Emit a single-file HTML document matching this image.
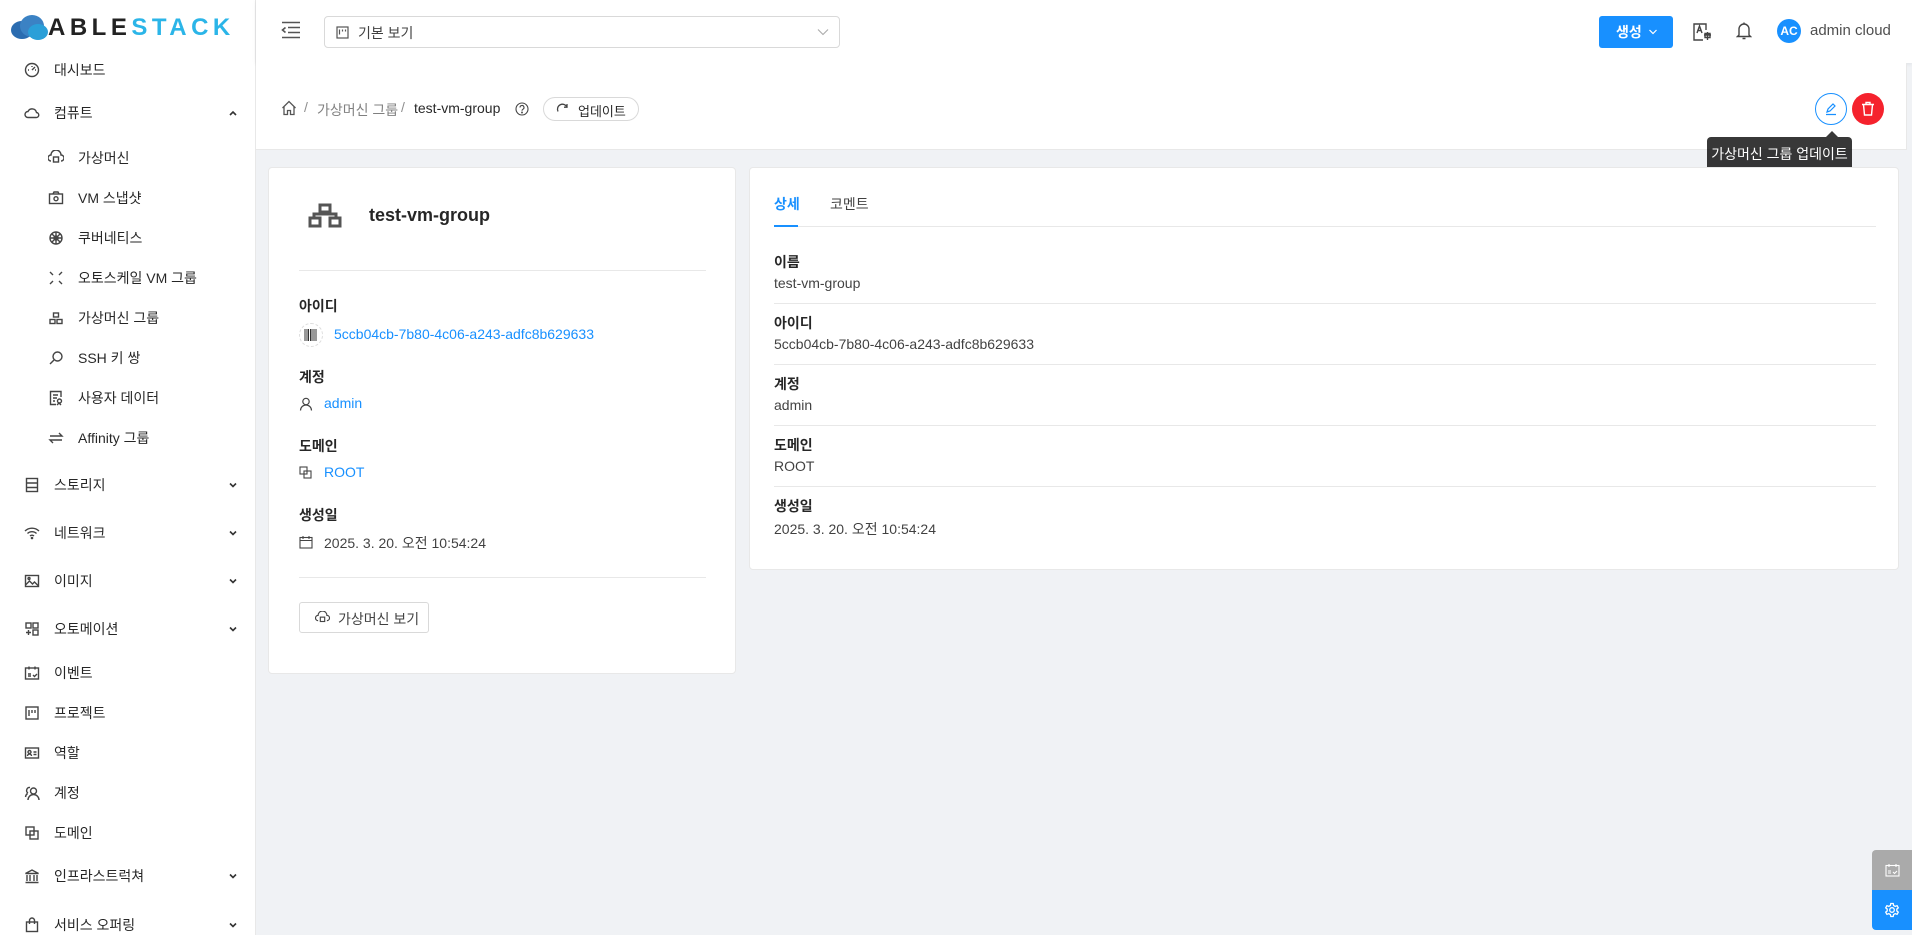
<!DOCTYPE html>
<html><head><meta charset="utf-8"><style>
*{box-sizing:border-box;margin:0;padding:0}
body{width:1912px;height:935px;overflow:hidden;background:#f0f2f5;font-family:"Liberation Sans","Noto Sans CJK KR",sans-serif;font-size:14px;color:rgba(0,0,0,.85);position:relative}
.a{position:absolute}
.side{left:0;top:0;width:256px;height:935px;background:#fff;border-right:1px solid #e8e8e8}
.it{position:absolute;left:0;width:256px;height:20px;line-height:20px;font-size:14px;color:rgba(0,0,0,.85)}
.it svg{position:absolute;top:2px;width:16px;height:16px;fill:none;stroke:#444;stroke-width:1.4}
.top .it svg{left:24px}.top .it span{position:absolute;left:54px}
.sub svg{left:48px}.sub span{position:absolute;left:78px}
.it svg.chev{left:227px!important;top:4px;width:12px;height:12px;stroke:#333;stroke-width:1.6}
.hdr{left:256px;top:0;width:1656px;height:63px;background:#fff;box-shadow:0 1px 4px rgba(0,21,41,.08)}
.card{background:#fff;border-radius:4px;border:1px solid #e8e8e8}
.lbl{font-weight:bold;font-size:14px;color:rgba(0,0,0,.85)}
.blue{color:#1890ff}
.ln{height:1px;background:#e8e8e8}
</style></head><body>
<div class="a side">
 <div class="a" style="left:10px;top:12px;width:245px;height:30px">
  <svg class="a" style="left:0;top:2px" width="40" height="26" viewBox="0 0 40 26"><ellipse cx="12" cy="16" rx="11" ry="9" fill="#2b6cb0"/><ellipse cx="22" cy="12" rx="12" ry="11" fill="#3b82c4"/><ellipse cx="28" cy="18" rx="10" ry="8" fill="#2a9fd8"/></svg>
  <span class="a" style="left:38px;top:3px;font-size:24px;line-height:26px;font-weight:bold;letter-spacing:4.5px;color:#222">ABLE<span style="color:#2bb5e8">STACK</span></span>
 </div>
 <div class="top">
  <div class="it" style="top:60px"><svg viewBox="0 0 16 16"><circle cx="8" cy="8" r="6.5"/><path d="M8 8l3-3M4 8h1M8 4v1M11 8h1"/></svg><span>대시보드</span></div>
  <div class="it" style="top:103px"><svg viewBox="0 0 16 16"><path d="M4 12.5a3 3 0 010-6 4.5 4.5 0 018.5 1 2.5 2.5 0 01-.5 5z"/></svg><span>컴퓨트</span><svg class="chev" viewBox="0 0 12 12"><path d="M3 8l3-3 3 3"/></svg></div>
 </div>
 <div class="sub">
  <div class="it" style="top:148px"><svg viewBox="0 0 16 16"><path d="M3 11a3 3 0 010-6 5 5 0 0110 0 3 3 0 010 6"/><rect x="5.5" y="7" width="5" height="5"/></svg><span>가상머신</span></div>
  <div class="it" style="top:188px"><svg viewBox="0 0 16 16"><rect x="1.5" y="4" width="13" height="9.5"/><path d="M5 4l1-2h4l1 2"/><circle cx="8" cy="8.7" r="2"/></svg><span>VM 스냅샷</span></div>
  <div class="it" style="top:228px"><svg viewBox="0 0 16 16"><circle cx="8" cy="8" r="6"/><circle cx="8" cy="8" r="2"/><path d="M8 2v12M2 8h12M4 4l8 8M12 4l-8 8"/></svg><span>쿠버네티스</span></div>
  <div class="it" style="top:268px"><svg viewBox="0 0 16 16"><path d="M2 2l3 3M14 2l-3 3M2 14l3-3M14 14l-3-3"/></svg><span>오토스케일 VM 그룹</span></div>
  <div class="it" style="top:308px"><svg viewBox="0 0 16 16"><rect x="5.5" y="3" width="5" height="4"/><rect x="2" y="9.5" width="5" height="4"/><rect x="9" y="9.5" width="5" height="4"/></svg><span>가상머신 그룹</span></div>
  <div class="it" style="top:348px"><svg viewBox="0 0 16 16"><circle cx="9.5" cy="6.5" r="4.5"/><path d="M6 10l-4 4"/></svg><span>SSH 키 쌍</span></div>
  <div class="it" style="top:388px"><svg viewBox="0 0 16 16"><path d="M13 7V1.5H2.5v13H8M5 5h5M5 8h4M5 11h2"/><circle cx="11.5" cy="11" r="2"/><path d="M9 15l2-2 2 2"/></svg><span>사용자 데이터</span></div>
  <div class="it" style="top:428px"><svg viewBox="0 0 16 16"><path d="M2 6h12L11 3M14 10H2l3 3"/></svg><span>Affinity 그룹</span></div>
 </div>
 <div class="top">
  <div class="it" style="top:475px"><svg viewBox="0 0 16 16"><rect x="2.5" y="1.5" width="11" height="13"/><path d="M2.5 6h11M2.5 10.5h11"/></svg><span>스토리지</span><svg class="chev" viewBox="0 0 12 12"><path d="M3 4.5l3 3 3-3"/></svg></div>
  <div class="it" style="top:523px"><svg viewBox="0 0 16 16"><path d="M1 6a10 10 0 0114 0M3.5 8.5a6.5 6.5 0 019 0M6 11a3 3 0 014 0"/><circle cx="8" cy="13" r=".6"/></svg><span>네트워크</span><svg class="chev" viewBox="0 0 12 12"><path d="M3 4.5l3 3 3-3"/></svg></div>
  <div class="it" style="top:571px"><svg viewBox="0 0 16 16"><rect x="1.5" y="2.5" width="13" height="11"/><path d="M1.5 12l4-4 3 3 2-2 4 4"/><circle cx="5" cy="5.5" r="1"/></svg><span>이미지</span><svg class="chev" viewBox="0 0 12 12"><path d="M3 4.5l3 3 3-3"/></svg></div>
  <div class="it" style="top:619px"><svg viewBox="0 0 16 16"><rect x="2" y="2" width="5" height="5"/><rect x="9" y="2" width="5" height="5"/><rect x="9" y="9" width="5" height="5"/><path d="M4.5 9v5M2 11.5h5"/></svg><span>오토메이션</span><svg class="chev" viewBox="0 0 12 12"><path d="M3 4.5l3 3 3-3"/></svg></div>
  <div class="it" style="top:663px"><svg viewBox="0 0 16 16"><rect x="1.5" y="3" width="13" height="11"/><path d="M5 1.5v3M11 1.5v3M4 9h3M4 11h3M9 10l1.5 1.5L13 9"/></svg><span>이벤트</span></div>
  <div class="it" style="top:703px"><svg viewBox="0 0 16 16"><rect x="2" y="2" width="12" height="12"/><path d="M5 5v6M8 5v3M11 5v3"/></svg><span>프로젝트</span></div>
  <div class="it" style="top:743px"><svg viewBox="0 0 16 16"><rect x="1.5" y="3" width="13" height="10"/><circle cx="5.5" cy="7" r="1.5"/><path d="M3.5 11a2 2 0 014 0M9.5 7h3M9.5 9.5h3"/></svg><span>역할</span></div>
  <div class="it" style="top:783px"><svg viewBox="0 0 16 16"><circle cx="9.5" cy="6" r="3"/><path d="M4 15a5.5 5.5 0 0111 0M6 2.5a3 3 0 00-2 5.5M1.5 12a5 5 0 012-3.5"/></svg><span>계정</span></div>
  <div class="it" style="top:823px"><svg viewBox="0 0 16 16"><rect x="2" y="2" width="8" height="8"/><rect x="6" y="6" width="8" height="8"/></svg><span>도메인</span></div>
  <div class="it" style="top:866px"><svg viewBox="0 0 16 16"><path d="M1.5 5.5L8 2l6.5 3.5zM3 7v6M6 7v6M10 7v6M13 7v6M1.5 14.5h13"/></svg><span>인프라스트럭쳐</span><svg class="chev" viewBox="0 0 12 12"><path d="M3 4.5l3 3 3-3"/></svg></div>
  <div class="it" style="top:915px"><svg viewBox="0 0 16 16"><rect x="2.5" y="5" width="11" height="9.5"/><path d="M5.5 7V3.5a2.5 2.5 0 015 0V7"/></svg><span>서비스 오퍼링</span><svg class="chev" viewBox="0 0 12 12"><path d="M3 4.5l3 3 3-3"/></svg></div>
 </div>
</div>

<div class="a hdr">
 <svg class="a" style="left:25px;top:21px" width="20" height="18" viewBox="0 0 20 18" fill="none" stroke="#555" stroke-width="1.6"><path d="M1 1.5h18M7 6.5h12M7 11.5h12M1 16.5h18M4.5 6.5L1.5 9l3 2.5"/></svg>
 <div class="a" style="left:68px;top:16px;width:516px;height:32px;border:1px solid #d9d9d9;border-radius:4px">
  <svg class="a" style="left:11px;top:9px" width="13" height="13" viewBox="0 0 13 13" fill="none" stroke="#555" stroke-width="1.2"><rect x="1" y="1" width="11" height="11"/><path d="M3.5 3.5v5M6.5 3.5v2M9.5 3.5v2"/></svg>
  <span class="a" style="left:33px;top:6px;font-size:14px;color:rgba(0,0,0,.75)">기본 보기</span>
  <svg class="a" style="left:492px;top:10px" width="12" height="10" viewBox="0 0 12 10" fill="none" stroke="#aaa" stroke-width="1.1"><path d="M1 2.5l5 5 5-5"/></svg>
 </div>
 <div class="a" style="left:1343px;top:16px;width:74px;height:32px;background:#1890ff;border-radius:3px;color:#fff;font-size:14px;font-weight:bold">
  <span class="a" style="left:17px;top:6px">생성</span>
  <svg class="a" style="left:49px;top:11px" width="10" height="10" viewBox="0 0 10 10" fill="none" stroke="#fff" stroke-width="1.2"><path d="M1.5 3l3.5 3.5L8.5 3"/></svg>
 </div>
 <svg class="a" style="left:1436px;top:22px" width="20" height="20" viewBox="0 0 20 20" fill="none" stroke="#444" stroke-width="1.4"><path d="M14 8V2H2v16h9"/><path d="M5 11l2.5-7 2.5 7M6 8.5h3"/><path d="M12 13h7M15.5 10v8M13 11.5h5v4h-5z"/></svg>
 <svg class="a" style="left:1480px;top:21px" width="16" height="20" viewBox="0 0 16 20" fill="none" stroke="#444" stroke-width="1.4"><path d="M3 14V8a5 5 0 0110 0v6l1.5 1.5h-13zM6.5 17.5h3M8 1.5v1.5"/></svg>
 <div class="a" style="left:1521px;top:19px;width:24px;height:24px;border-radius:50%;background:#1890ff;color:#fff;font-size:12px;font-weight:bold;text-align:center;line-height:24px">AC</div>
 <span class="a" style="left:1554px;top:22px;font-size:15px;color:rgba(0,0,0,.7)">admin cloud</span>
</div>

<div class="a" style="left:256px;top:63px;width:1651px;height:87px;background:#fff;border-right:1px solid #e8e8e8;border-bottom:1px solid #e8e8e8">
 <svg class="a" style="left:25px;top:37px" width="16" height="16" viewBox="0 0 16 16" fill="none" stroke="#555" stroke-width="1.3"><path d="M1.5 8L8 1.5 14.5 8M3 6.5V14.5h3.5v-4h3v4H13V6.5"/></svg>
 <span class="a" style="left:48px;top:36px;color:rgba(0,0,0,.45)">/</span>
 <span class="a" style="left:61px;top:37px;color:rgba(0,0,0,.5);font-size:14px">가상머신 그룹</span>
 <span class="a" style="left:145px;top:36px;color:rgba(0,0,0,.45)">/</span>
 <span class="a" style="left:158px;top:37px;font-size:14px">test-vm-group</span>
 <svg class="a" style="left:259px;top:39px" width="14" height="14" viewBox="0 0 14 14" fill="none" stroke="#444" stroke-width="1.1"><circle cx="7" cy="7" r="6"/><path d="M5 5.5a2 2 0 113 1.7c-.8.4-1 .8-1 1.5"/><circle cx="7" cy="10.5" r=".4"/></svg>
 <div class="a" style="left:287px;top:34px;width:96px;height:24px;border:1px solid #d9d9d9;border-radius:12px">
  <svg class="a" style="left:12px;top:5px" width="13" height="13" viewBox="0 0 13 13" fill="none" stroke="#444" stroke-width="1.3"><path d="M11 4A5 5 0 102 8.5M11 1v3.2H8"/></svg>
  <span class="a" style="left:34px;top:3px;font-size:13px">업데이트</span>
 </div>
 <div class="a" style="left:1559px;top:30px;width:32px;height:32px;border:1px solid #1890ff;border-radius:50%">
  <svg class="a" style="left:8px;top:8px" width="14" height="14" viewBox="0 0 14 14" fill="none" stroke="#1890ff" stroke-width="1.2"><path d="M3 10l1-3 5-5 2 2-5 5zM2 12.5h10"/></svg>
 </div>
 <div class="a" style="left:1596px;top:30px;width:32px;height:32px;background:#f5222d;border-radius:50%">
  <svg class="a" style="left:9px;top:8px" width="14" height="16" viewBox="0 0 14 16" fill="none" stroke="#fff" stroke-width="1.4"><path d="M1 3.5h12M5 3.5V1.5h4v2M2.5 3.5l1 10.5h7l1-10.5"/></svg>
 </div>
</div>

<div class="a" style="left:1707px;top:137px;width:145px;height:34px;background:rgba(0,0,0,.78);border-radius:4px;color:#fff;font-size:14px;line-height:34px;text-align:center">가상머신 그룹 업데이트</div>
<div class="a" style="left:1826px;top:131px;width:0;height:0;border-left:6px solid transparent;border-right:6px solid transparent;border-bottom:6px solid rgba(0,0,0,.78)"></div>

<div class="a card" style="left:268px;top:167px;width:468px;height:507px">
 <svg class="a" style="left:39px;top:35px" width="34" height="26" viewBox="0 0 34 26" fill="none" stroke="#555" stroke-width="3"><rect x="12" y="2" width="10" height="7"/><rect x="2" y="15" width="10" height="8"/><rect x="22" y="15" width="10" height="8"/><path d="M6 14v-3h22v3"/></svg>
 <span class="a" style="left:100px;top:37px;font-size:18px;font-weight:bold;color:rgba(0,0,0,.85)">test-vm-group</span>
 <div class="a ln" style="left:30px;top:102px;width:407px"></div>
 <span class="a lbl" style="left:30px;top:128px">아이디</span>
 <div class="a" style="left:30px;top:155px;width:24px;height:24px;border:1px dashed #ddd;border-radius:50%"></div>
 <svg class="a" style="left:35px;top:161px" width="14" height="12" viewBox="0 0 14 12" stroke="#333" stroke-width="1"><path d="M1 0v12M3 0v12M4.5 0v12M6.5 0v12M8 0v12M10 0v12M12 0v12"/></svg>
 <span class="a blue" style="left:65px;top:158px;font-size:14px">5ccb04cb-7b80-4c06-a243-adfc8b629633</span>
 <span class="a lbl" style="left:30px;top:199px">계정</span>
 <svg class="a" style="left:30px;top:229px" width="14" height="14" viewBox="0 0 14 14" fill="none" stroke="#444" stroke-width="1.2"><circle cx="7" cy="4.5" r="3.2"/><path d="M1.5 13.5a5.5 5.5 0 0111 0"/></svg>
 <span class="a blue" style="left:55px;top:227px">admin</span>
 <span class="a lbl" style="left:30px;top:268px">도메인</span>
 <svg class="a" style="left:30px;top:298px" width="13" height="13" viewBox="0 0 13 13" fill="none" stroke="#444" stroke-width="1.1"><rect x="1" y="1" width="7" height="7"/><rect x="5" y="5" width="7" height="7"/></svg>
 <span class="a blue" style="left:55px;top:296px">ROOT</span>
 <span class="a lbl" style="left:30px;top:337px">생성일</span>
 <svg class="a" style="left:30px;top:367px" width="14" height="14" viewBox="0 0 14 14" fill="none" stroke="#444" stroke-width="1.1"><rect x="1" y="2.5" width="12" height="10.5"/><path d="M1 5.5h12M4 1v3M10 1v3"/></svg>
 <span class="a" style="left:55px;top:365px;color:rgba(0,0,0,.75)">2025. 3. 20. 오전 10:54:24</span>
 <div class="a ln" style="left:30px;top:409px;width:407px"></div>
 <div class="a" style="left:30px;top:434px;width:130px;height:31px;border:1px solid #d9d9d9;border-radius:3px">
  <svg class="a" style="left:15px;top:8px" width="15" height="14" viewBox="0 0 16 16" fill="none" stroke="#444" stroke-width="1.3"><path d="M3 11a3 3 0 010-6 5 5 0 0110 0 3 3 0 010 6"/><rect x="5.5" y="7" width="5" height="5"/></svg>
  <span class="a" style="left:38px;top:6px;color:rgba(0,0,0,.75)">가상머신 보기</span>
 </div>
</div>

<div class="a card" style="left:749px;top:167px;width:1150px;height:403px">
 <span class="a blue" style="left:24px;top:26px;font-weight:bold">상세</span>
 <span class="a" style="left:80px;top:26px;color:rgba(0,0,0,.75)">코멘트</span>
 <div class="a ln" style="left:24px;top:58px;width:1102px"></div>
 <div class="a" style="left:24px;top:57px;width:24px;height:2px;background:#1890ff"></div>
 <span class="a lbl" style="left:24px;top:84px">이름</span>
 <span class="a" style="left:24px;top:107px;color:rgba(0,0,0,.75)">test-vm-group</span>
 <div class="a ln" style="left:24px;top:135px;width:1102px"></div>
 <span class="a lbl" style="left:24px;top:145px">아이디</span>
 <span class="a" style="left:24px;top:168px;color:rgba(0,0,0,.75)">5ccb04cb-7b80-4c06-a243-adfc8b629633</span>
 <div class="a ln" style="left:24px;top:196px;width:1102px"></div>
 <span class="a lbl" style="left:24px;top:206px">계정</span>
 <span class="a" style="left:24px;top:229px;color:rgba(0,0,0,.75)">admin</span>
 <div class="a ln" style="left:24px;top:257px;width:1102px"></div>
 <span class="a lbl" style="left:24px;top:267px">도메인</span>
 <span class="a" style="left:24px;top:290px;color:rgba(0,0,0,.75)">ROOT</span>
 <div class="a ln" style="left:24px;top:318px;width:1102px"></div>
 <span class="a lbl" style="left:24px;top:328px">생성일</span>
 <span class="a" style="left:24px;top:351px;color:rgba(0,0,0,.75)">2025. 3. 20. 오전 10:54:24</span>
</div>

<div class="a" style="left:1872px;top:850px;width:40px;height:40px;background:#aaa;border-radius:4px 0 0 0">
 <svg class="a" style="left:13px;top:13px" width="15" height="14" viewBox="0 0 15 14" fill="none" stroke="#fff" stroke-width="1.1"><rect x="1" y="2.5" width="13" height="10.5"/><path d="M4 1v3M11 1v3M3 8h3M3 10h3M8 9l1.5 1.5L12 8"/></svg>
</div>
<div class="a" style="left:1872px;top:890px;width:40px;height:40px;background:#1890ff;border-radius:0 0 0 4px">
 <svg class="a" style="left:12px;top:12px" width="16" height="16" viewBox="0 0 16 16" fill="none" stroke="#fff" stroke-width="1.3"><circle cx="8" cy="8" r="2.3"/><path d="M6.8 1.5h2.4l.4 2 1.6.9 1.9-.7 1.2 2.1-1.5 1.3v1.8l1.5 1.3-1.2 2.1-1.9-.7-1.6.9-.4 2H6.8l-.4-2-1.6-.9-1.9.7-1.2-2.1L3.2 8.9V7.1L1.7 5.8l1.2-2.1 1.9.7 1.6-.9z"/></svg>
</div>
</body></html>
